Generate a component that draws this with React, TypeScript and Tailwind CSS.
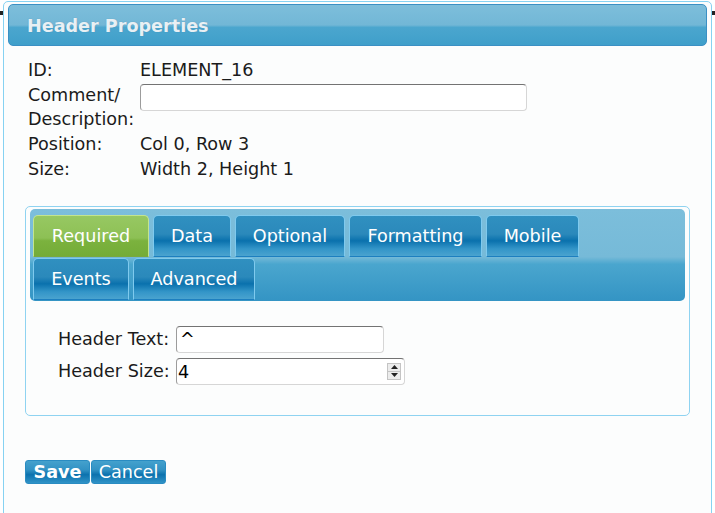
import { useState } from 'react'

const tabs = [
  { id: 'required', label: 'Required', w: 'w-[116px]' },
  { id: 'data', label: 'Data', w: 'w-[78px]' },
  { id: 'optional', label: 'Optional', w: 'w-[110px]' },
  { id: 'formatting', label: 'Formatting', w: 'w-[133px]' },
  { id: 'mobile', label: 'Mobile', w: 'w-[93px]' },
  { id: 'events', label: 'Events', w: 'w-[96px]' },
  { id: 'advanced', label: 'Advanced', w: 'w-[122px]' },
]

const inputBox =
  'h-[27px] rounded-[4px] border border-[#d6d6d6] border-t-[#737373] border-l-[#9c9c9c] bg-white'

export default function App() {
  const [active, setActive] = useState('required')
  const [comment, setComment] = useState('')
  const [headerText, setHeaderText] = useState('^')
  const [headerSize, setHeaderSize] = useState(4)

  return (
    <div className="relative h-[513px] w-[715px] overflow-hidden bg-white font-['DejaVu_Sans',sans-serif] text-[17.6px] text-[#1b1b1b]">
      {/* bits of the page behind the dialog */}
      <div className="absolute left-0 top-[11px] h-[4px] w-[3px] bg-[#222]" />
      <div className="absolute right-0 top-[11px] h-[4px] w-[3px] bg-[#222]" />

      <div className="ml-[3px] mt-[1px] h-[540px] w-[709px] rounded-t-[5px] border border-[#86d2f2] bg-[#fcfdfd]">
        {/* title bar */}
        <div className="mx-[4px] mt-[2px] flex h-[42px] items-center rounded-[5px] border border-[#3b90c4] bg-[linear-gradient(to_bottom,#7dbedb_0%,#72b7d6_50%,#4ba6ce_56%,#3f9fca_100%)] pl-[18px] pt-[3px]">
          <span className="font-bold leading-none text-[#e8f0f4] [text-shadow:0_0_1px_rgba(60,120,160,0.6)]">
            Header Properties
          </span>
        </div>

        {/* element info */}
        <div className="ml-[24px] mt-[12px] grid grid-cols-[112px_1fr] leading-[24.5px]">
          <div>ID:</div>
          <div>ELEMENT_16</div>
          <div>
            Comment/
            <br />
            Description:
          </div>
          <div className="pt-[1px]">
            <input
              value={comment}
              onChange={(e) => setComment(e.target.value)}
              className={`${inputBox} w-[387px] px-[4px] outline-none`}
            />
          </div>
          <div>Position:</div>
          <div>Col 0, Row 3</div>
          <div className="pt-[1px]">Size:</div>
          <div className="pt-[1px]">Width 2, Height 1</div>
        </div>

        {/* tabs box */}
        <div className="ml-[21px] mt-[24px] h-[210px] w-[665px] rounded-[5px] border border-[#8fd3f1] px-[4px] pt-[2px]">
          <div className="flex flex-wrap gap-x-[4px] gap-y-[1px] rounded-[5px] bg-[linear-gradient(to_bottom,#7cbedb_0%,#76bad8_52%,#4aa6ce_60%,#3494c4_100%)] px-[3px] pb-[1px] pt-[6px] pr-[100px]">
            {tabs.map((t) => (
              <button
                key={t.id}
                type="button"
                onClick={() => setActive(t.id)}
                className={`${t.w} h-[42px] rounded-t-[5px] border pt-[3px] text-white leading-none ${
                  active === t.id
                    ? 'border-[#c3e48e] border-b-[#7aa83f] bg-[linear-gradient(to_bottom,#97c862_0%,#8dc055_55%,#7bb23e_62%,#74ac38_100%)]'
                    : 'border-[#7fcaee] border-b-[#1d7fc0] bg-[linear-gradient(to_bottom,#3090c0_0%,#2b89bb_45%,#0a71ad_62%,#3395c8_82%,#4aa3cf_100%)]'
                }`}
              >
                {t.label}
              </button>
            ))}
          </div>

          {/* tab content */}
          <div className="ml-[28px] mt-[25px] grid grid-cols-[118px_1fr] items-center gap-y-[5px]">
            <div>Header Text:</div>
            <input
              value={headerText}
              onChange={(e) => setHeaderText(e.target.value)}
              className={`${inputBox} w-[208px] px-[3px] text-black outline-none`}
            />
            <div>Header Size:</div>
            <div className={`${inputBox} flex h-[27px] w-[229px] items-center pr-[3px]`}>
              <input
                value={headerSize}
                onChange={(e) => setHeaderSize(Number(e.target.value) || 0)}
                className="h-full min-w-0 flex-1 bg-transparent px-[1px] pt-[2px] text-black outline-none"
              />
              <div className="flex h-[17px] w-[14px] flex-col border border-[#c4c4c4] bg-[#ececec]">
                <button
                  type="button"
                  onClick={() => setHeaderSize((v) => v + 1)}
                  className="flex flex-1 items-center justify-center border-b border-[#c4c4c4]"
                >
                  <svg width="7" height="4" viewBox="0 0 7 4">
                    <path d="M0 4 L3.5 0 L7 4 Z" fill="#222" />
                  </svg>
                </button>
                <button
                  type="button"
                  onClick={() => setHeaderSize((v) => v - 1)}
                  className="flex flex-1 items-center justify-center"
                >
                  <svg width="7" height="4" viewBox="0 0 7 4">
                    <path d="M0 0 L7 0 L3.5 4 Z" fill="#222" />
                  </svg>
                </button>
              </div>
            </div>
          </div>
        </div>

        {/* buttons */}
        <div className="ml-[21px] mt-[44px] flex gap-[1px]">
          <button
            type="button"
            className="h-[24px] w-[65px] rounded-[3px] border border-[#2a8cc2] bg-[linear-gradient(to_bottom,#44a1cd_0%,#3292c4_40%,#0c72ae_62%,#3093c7_100%)] pt-[2px] font-bold leading-none text-white"
          >
            Save
          </button>
          <button
            type="button"
            className="h-[24px] w-[75px] rounded-[3px] border border-[#2a8cc2] bg-[linear-gradient(to_bottom,#44a1cd_0%,#3292c4_40%,#0c72ae_62%,#3093c7_100%)] pt-[2px] leading-none text-white"
          >
            Cancel
          </button>
        </div>
      </div>
    </div>
  )
}
